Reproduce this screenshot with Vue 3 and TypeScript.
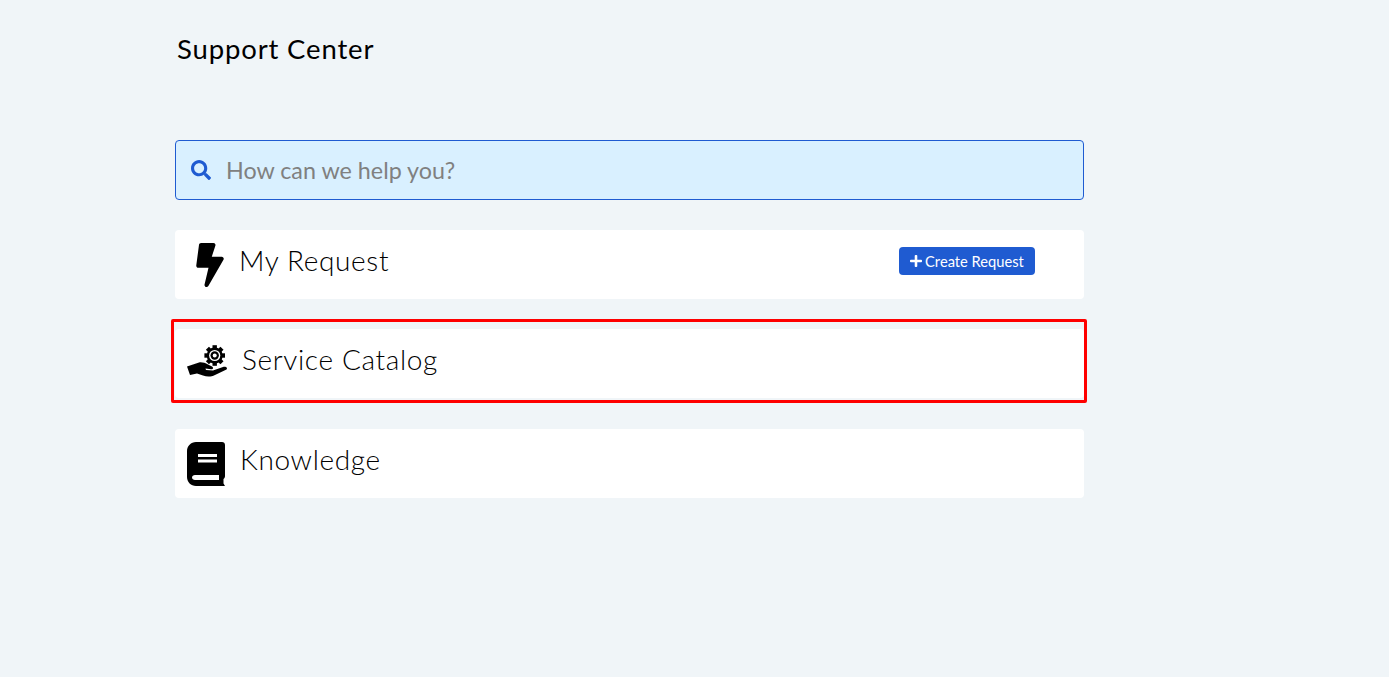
<script setup lang="ts">
const gearTeeth: number[] = [0, 45, 90, 135, 180, 225, 270, 315]
</script>

<template>
  <main class="page">
    <h1 class="title">Support Center</h1>
    <label class="search">
      <svg class="search-icon" viewBox="0 0 512 512" aria-hidden="true">
        <path fill="#1f5bd1" d="M505 442.7L405.3 343c-4.5-4.5-10.6-7-17-7H372c27.6-35.3 44-79.7 44-128C416 93.1 322.9 0 208 0S0 93.1 0 208s93.1 208 208 208c48.3 0 92.7-16.4 128-44v16.3c0 6.4 2.5 12.5 7 17l99.7 99.7c9.4 9.4 24.6 9.4 33.9 0l28.3-28.3c9.4-9.4 9.4-24.6.1-34zM208 336c-70.7 0-128-57.2-128-128 0-70.7 57.2-128 128-128 70.7 0 128 57.2 128 128 0 70.7-57.2 128-128 128z" />
      </svg>
      <input class="search-input" type="text" placeholder="How can we help you?" />
    </label>

    <section class="card request">
      <svg class="bolt" viewBox="0 0 320 512" aria-hidden="true">
        <path d="M296 160H180.6l42.6-129.8C227.2 15 215.7 0 200 0H56C44 0 33.8 8.9 32.2 20.8l-32 240C-1.7 275.2 9.5 288 24 288h118.7L96.6 482.5c-3.6 15.2 8 29.5 23.3 29.5 8.4 0 16.4-4.4 20.8-12l176-304c9.3-15.9-2.2-36-20.7-36z" />
      </svg>
      <h2 class="card-title">My Request</h2>
      <button class="create" type="button">
        <svg class="plus" viewBox="0 0 448 512" aria-hidden="true">
          <path fill="#fff" d="M416 208H272V64c0-17.67-14.33-32-32-32h-32c-17.67 0-32 14.33-32 32v144H32c-17.67 0-32 14.33-32 32v32c0 17.67 14.33 32 32 32h144v144c0 17.67 14.33 32 32 32h32c17.67 0 32-14.33 32-32V304h144c17.67 0 32-14.33 32-32v-32c0-17.67-14.33-32-32-32z" />
        </svg>
        <span>Create Request</span>
      </button>
    </section>

    <section class="card catalog">
      <svg class="service" viewBox="0 0 42 36" aria-hidden="true">
        <g transform="translate(27.7 11.5)">
          <rect v-for="a in gearTeeth" :key="a" x="-2.2" y="-10.3" width="4.4" height="4" :transform="`rotate(${a})`" />
          <circle r="8" />
          <circle r="5.6" fill="#fff" />
          <circle r="4.2" />
          <circle r="2" fill="#fff" />
        </g>
        <path d="M0 22.5L12 18.5C15 18 18 19 21 20.5L25 22.5C27 23.8 26 25.5 24 25.2L18.5 24.5L19 26L26 26.5L36 23C39 22 41 24 39.5 25.5L28 31C24 33 20 33 16 31.5L10 29.5L3 31Z" />
      </svg>
      <h2 class="card-title">Service Catalog</h2>
      <div class="highlight"></div>
    </section>

    <section class="card knowledge">
      <svg class="book" viewBox="0 0 38 44" aria-hidden="true">
        <path d="M9 0H35C36.8 0 38 1.2 38 3V34C38 35.5 37.4 36.4 36.5 37V41.5L38 44H9C4 44 0 40 0 35V9C0 4 4 0 9 0Z" />
        <rect x="11" y="12" width="19" height="3" fill="#fff" />
        <rect x="11" y="17.5" width="19" height="3" fill="#fff" />
        <path d="M8 33H32V38H8C6.3 38 5 37 5 35.5S6.3 33 8 33Z" fill="#fff" />
      </svg>
      <h2 class="card-title">Knowledge</h2>
    </section>
  </main>
</template>

<style scoped>
.page {
  box-sizing: border-box;
  width: 909px;
  margin-left: 175px;
  padding-top: 32px;
  display: flex;
  flex-direction: column;
}
.title {
  margin: 0 0 74px 2px;
  height: 34px;
  font: 400 27.5px/34px Lato, sans-serif;
  letter-spacing: 0.85px;
  color: #000;
}
.search {
  box-sizing: border-box;
  height: 60px;
  display: flex;
  align-items: center;
  padding-left: 15px;
  gap: 15px;
  background: #d9f0ff;
  border: 1px solid #1f5bd1;
  border-radius: 4px;
  margin-bottom: 30px;
}
.search-icon {
  width: 20px;
  height: 20px;
  flex: none;
}
.search-input {
  flex: 1;
  border: 0;
  outline: 0;
  background: transparent;
  padding: 0;
  font: 400 23.3px/32px Lato, sans-serif;
  color: #7f7f7f;
}
.search-input::placeholder {
  color: #808080;
  opacity: 1;
}
.card {
  position: relative;
  height: 69px;
  background: #fff;
  border-radius: 4px;
  display: flex;
  align-items: center;
}
.request {
  margin-bottom: 30px;
  padding-left: 20px;
}
.catalog {
  margin-bottom: 31px;
  padding-left: 12px;
}
.knowledge {
  padding-left: 12px;
}
.card-title {
  margin: 0;
  font: 300 28px/36px Lato, sans-serif;
  letter-spacing: 0.65px;
  color: #000;
  position: relative;
  top: -5px;
}
.bolt {
  width: 30px;
  height: 44px;
  margin-right: 14px;
  flex: none;
}
.service {
  width: 42px;
  height: 36px;
  margin-right: 13px;
  flex: none;
  position: relative;
  top: -2px;
}
.book {
  width: 38px;
  height: 44px;
  margin-right: 15px;
  flex: none;
}
.create {
  margin-left: auto;
  margin-right: 49px;
  position: relative;
  top: -4px;
  width: 136px;
  height: 28px;
  border: 0;
  border-radius: 4px;
  background: #1f5bd1;
  color: #fff;
  font: 400 14.7px/18px Lato, sans-serif;
  display: flex;
  align-items: center;
  justify-content: center;
  gap: 3px;
  padding: 0;
}
.plus {
  width: 12px;
  height: 14px;
}
.highlight {
  position: absolute;
  left: -4px;
  right: -3px;
  top: -10px;
  bottom: -5px;
  border: 3px solid #f00;
  border-radius: 2px;
  pointer-events: none;
}
</style>

<style>
html, body {
  margin: 0;
  min-height: 100%;
  background: #f0f5f8;
  overflow: hidden;
}
</style>
